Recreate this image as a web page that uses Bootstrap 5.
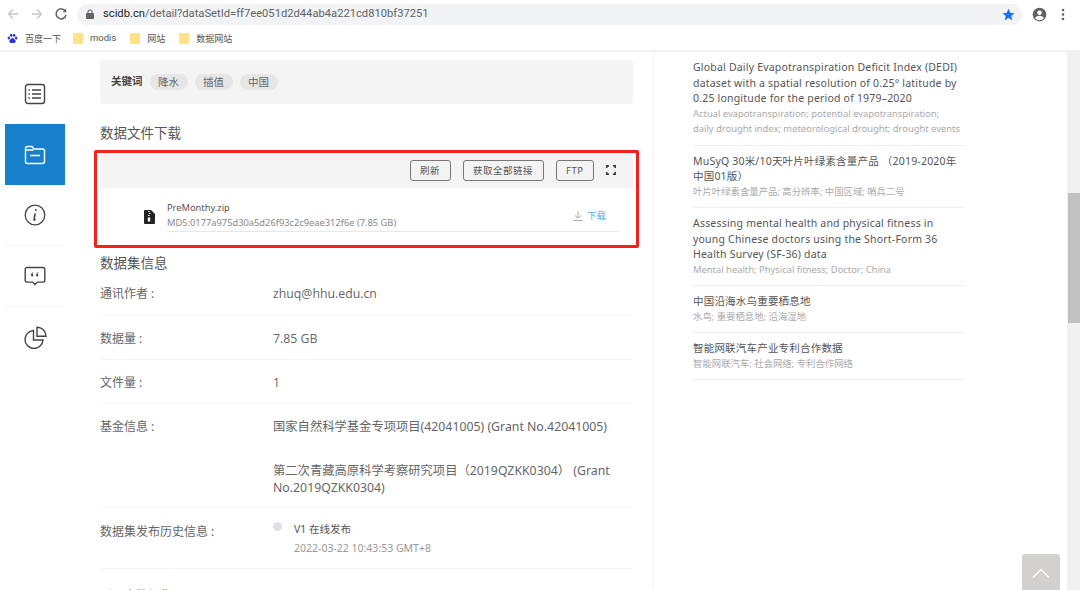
<!DOCTYPE html>
<html lang="zh">
<head>
<meta charset="utf-8">
<title>scidb</title>
<link href="https://cdn.jsdelivr.net/npm/bootstrap@5.3.0/dist/css/bootstrap.min.css" rel="stylesheet">
<style>
html,body{height:590px;overflow:hidden;margin:0;background:#fff}
body{font-family:"Open Sans","Noto Sans CJK SC",sans-serif;color:#555;position:relative}
.cn,.cn *{font-family:"Noto Sans","Noto Sans CJK SC",sans-serif}
.topbar{height:52px;border-bottom:2px solid #f1f1f1;background:#fff}
.addr-row{height:28px;padding:0}
.nav-ic{width:14px;height:14px;margin-left:6px;flex:none}
.omni{height:21px;width:945px;flex:none;margin-left:9px;border-radius:11px;background:#f1f3f4;font-size:11.2px;color:#5f6368;padding:0 7px 0 9px;font-family:"Roboto",sans-serif;white-space:nowrap}
.omni b{font-weight:400;color:#222}
.bm-row{height:21px;font-size:9px;color:#555;padding-left:7px}
.bm-item{margin-right:14px}
.bm-first{margin-right:12px}
.modis{font-family:"Roboto",sans-serif!important;font-size:9.5px}
.folder{width:10px;height:11px;background:#ffe28a;border-radius:1px;margin-right:7px;flex:none}
.stage{height:538px;overflow:hidden}
.rail{width:60px;margin-left:5px;flex:none;padding-top:11px}
.rail-it{height:61px;border-bottom:1px solid #f6f6f6}
.rail-it.on{background:#1680cd;border:0}
.rail-it.plain{border-bottom:0}
.mid{width:533px;margin-left:35px;flex:none;position:relative}
.kw{height:44px;margin-top:8px;background:#f4f4f4;border-radius:3px;padding-left:11px;font-size:11px;color:#444}
.kw b{font-weight:700;margin-right:7px;font-size:10.5px}
.tagpill{background:#e6e6e6;border-radius:9px;height:16px;line-height:16px;font-size:10.5px;margin-right:7px;color:#666;width:38px;text-align:center;white-space:nowrap}
.sect{font-size:13.5px;color:#555;font-weight:400;line-height:20px;margin:0}
.redbox{margin:7px -6px 0 -6px;border:3px solid #f3201b;border-radius:2px;padding:0 3px;height:98px;background:#fff}
.panel{background:#f4f4f4;height:91px;border-radius:2px}
.tools{height:35px;padding-right:13px;padding-bottom:1px}
.outbtn{height:21px;line-height:19px;border:1px solid #777;border-radius:3px;padding:0 9.5px;font-size:9.5px;color:#555;background:transparent;letter-spacing:.5px;margin-right:12px}
.filecard{background:#fff;height:56px;border-radius:3px 3px 0 0;padding-left:67px;padding-right:13px}
.fileinner{border-bottom:1px solid #e8e8e8;height:44px;padding-top:12px}
.fn{font-size:9.3px;color:#555;line-height:15px}
.md{font-size:9.3px;color:#888;line-height:15px;white-space:nowrap}
.dl{font-size:9.5px;color:#55a9f0;margin-left:auto;padding-right:14px}
.sect2{margin-top:5px}
.inf{display:flex;font-size:12.3px;color:#666;border-bottom:1px solid #f4f4f4}
.inf .lb{width:173px;flex:none;font-size:12px}
.inf .vl{flex:1;line-height:17px}
.hist{font-size:10.5px;line-height:19px;color:#555}
.histdate{color:#999;font-size:10.5px;line-height:18px}
.dot{width:9px;height:9px;border-radius:50%;background:#dfe1ea;flex:none;margin-right:12px;margin-top:2px}
.vr-line{width:1px;background:#f3f3f3;margin-left:20px;flex:none;height:538px}
.rightc{width:272px;margin-left:39px;flex:none;padding-top:8px}
.ri{border-bottom:1px solid #eee;margin-bottom:8px;padding-bottom:8px}
.ri .tt{font-size:10.5px;line-height:15.5px;color:#555;letter-spacing:.2px}
.ri .sb{font-size:9.4px;line-height:15.5px;color:#aaa;white-space:nowrap;margin-top:-1px}
.scrollb{position:absolute;right:0;top:52px;width:13px;height:538px;background:#f1f1f1}
.thumb{position:absolute;left:1px;right:0;top:141px;height:130px;background:#c1c1c1}
.totop{position:absolute;right:20px;bottom:-2px;width:38px;height:38px;background:#d3d0d0;border-radius:3px}
</style>
</head>
<body>
<div class="topbar">
  <div class="addr-row d-flex align-items-center">
    <svg class="nav-ic" viewBox="0 0 14 14" fill="none" stroke="#c4c7ca" stroke-width="1.4"><path d="M12 7H2.500M7 2.500 2.500 7 7 11.500"/></svg>
    <svg class="nav-ic" style="margin-left:10px" viewBox="0 0 14 14" fill="none" stroke="#c4c7ca" stroke-width="1.4"><path d="M2 7h9.500M7 2.500 11.500 7 7 11.500"/></svg>
    <svg class="nav-ic" style="margin-left:10px" viewBox="0 0 14 14" fill="none" stroke="#5f6368" stroke-width="1.5"><path d="M11.600 4.600A5 5 0 1 0 12 8"/><path d="M12.200 1.600v3.600H8.600" fill="#5f6368" stroke="none"/></svg>
    <div class="omni d-flex align-items-center">
      <svg width="8" height="10" viewBox="0 0 8 10" class="flex-none" style="margin-right:9px"><path d="M1 4h6a1 1 0 0 1 1 1v4a1 1 0 0 1-1 1H1a1 1 0 0 1-1-1V5a1 1 0 0 1 1-1z" fill="#5f6368"/><path d="M2 4.500V3a2 2 0 0 1 4 0v1.500" fill="none" stroke="#5f6368" stroke-width="1.100"/></svg>
      <span><b>scidb.cn</b>/detail?dataSetId=ff7ee051d2d44ab4a221cd810bf37251</span>
      <svg width="13" height="13" viewBox="0 0 24 24" class="ms-auto"><path fill="#1a73e8" d="M12 1.500l3.200 7.300 7.900.7-6 5.200 1.800 7.800L12 18.400l-6.900 4.100 1.800-7.800-6-5.200 7.900-.7z"/></svg>
    </div>
    <svg width="15" height="15" viewBox="0 0 24 24" class="flex-none" style="margin-left:10px"><circle cx="12" cy="12" r="11" fill="#5f6368"/><circle cx="12" cy="9" r="3.600" fill="#fff"/><path d="M5 18c1.500-3 4-4 7-4s5.500 1 7 4c-1.700 1.900-4.200 3-7 3s-5.300-1.100-7-3z" fill="#fff"/></svg>
    <svg width="4" height="13" viewBox="0 0 4 13" class="flex-none" style="margin-left:14px" fill="#5f6368"><circle cx="2" cy="2" r="1.300"/><circle cx="2" cy="6.500" r="1.300"/><circle cx="2" cy="11" r="1.300"/></svg>
  </div>
  <div class="bm-row d-flex align-items-center cn">
    <div class="d-flex align-items-center bm-first">
      <svg width="11" height="11" viewBox="0 0 12 12" style="margin-right:7px" fill="#2932e1"><ellipse cx="2" cy="5.500" rx="1.300" ry="1.700"/><ellipse cx="4.500" cy="2.500" rx="1.300" ry="1.800"/><ellipse cx="7.700" cy="2.500" rx="1.300" ry="1.800"/><ellipse cx="10" cy="5.500" rx="1.300" ry="1.700"/><path d="M6 5.500c-1.500 0-2 1.500-3 2.500s-.5 3 1.500 3c.7 0 1-.3 1.500-.3s.8.300 1.500.3c2 0 2.500-2 1.500-3S7.500 5.500 6 5.500z"/></svg>
      <span>百度一下</span>
    </div>
    <div class="d-flex align-items-center bm-item"><i class="folder"></i><span class="modis">modis</span></div>
    <div class="d-flex align-items-center bm-item"><i class="folder"></i><span>网站</span></div>
    <div class="d-flex align-items-center bm-item"><i class="folder"></i><span>数据网站</span></div>
  </div>
</div>
<div class="stage d-flex">
  <div class="rail">
    <div class="rail-it d-flex align-items-center justify-content-center plain">
      <svg width="22" height="22" viewBox="0 0 22 22" fill="none" stroke="#444" stroke-width="1.400"><rect x="1.500" y="1.500" width="19" height="19" rx="2.500"/><path d="M8 7h9M8 11h9M8 15h9"/><path d="M4.500 7h1.500M4.500 11h1.500M4.500 15h1.500"/></svg>
    </div>
    <div class="rail-it on d-flex align-items-center justify-content-center">
      <svg width="22" height="20" viewBox="0 0 22 20" fill="none" stroke="#fff" stroke-width="1.400"><path d="M1.500 17V3.500a2 2 0 0 1 2-2h4.500l2 2.500h8.500a2 2 0 0 1 2 2V16.500a2 2 0 0 1-2 2h-15a2 2 0 0 1-2-1.500z"/><path d="M1.500 5h8M6 10.500h10"/></svg>
    </div>
    <div class="rail-it d-flex align-items-center justify-content-center">
      <svg width="22" height="22" viewBox="0 0 22 22" fill="none" stroke="#444" stroke-width="1.300"><circle cx="11" cy="11" r="9.800"/><path d="M11.200 9.300l-1.200 6.400c0 .5.700.5 1.500-.3" stroke-width="1.600"/><circle cx="11.900" cy="6" r="1" fill="#444" stroke="none"/></svg>
    </div>
    <div class="rail-it d-flex align-items-center justify-content-center">
      <svg width="22" height="20" viewBox="0 0 22 20" fill="none" stroke="#444" stroke-width="1.400"><path d="M3 1.500h16a1.800 1.800 0 0 1 1.800 1.800v11a1.800 1.800 0 0 1-1.800 1.800h-5.500L11 18.500l-2.500-2.400H3a1.800 1.800 0 0 1-1.800-1.800v-11A1.800 1.800 0 0 1 3 1.500z"/><path d="M9.300 6.200C7.800 6.800 7 7.800 7 9.300a1.200 1.200 0 1 0 1.400-1.200c.1-.6.500-1 1.100-1.300zM14.300 6.200c-1.500.6-2.300 1.600-2.300 3.100a1.200 1.200 0 1 0 1.400-1.200c.1-.6.500-1 1.100-1.300z" fill="#444" stroke="none"/></svg>
    </div>
    <div class="rail-it d-flex align-items-center justify-content-center plain">
      <svg width="23" height="23" viewBox="0 0 23 23" fill="none" stroke="#444" stroke-width="1.400"><path d="M9.500 4.500a9 9 0 1 0 9.500 9.500H9.500z"/><path d="M13 1.200a9 9 0 0 1 9 9h-9z"/></svg>
    </div>
  </div>

  <div class="mid cn">
    <div class="kw d-flex align-items-center">
      <b>关键词</b><span class="tagpill">降水</span><span class="tagpill">插值</span><span class="tagpill">中国</span>
    </div>
    <h2 class="sect" style="margin-top:19px">数据文件下载</h2>
    <div class="redbox">
      <div class="panel">
        <div class="tools d-flex align-items-center justify-content-end">
          <button class="outbtn" type="button">刷新</button>
          <button class="outbtn" type="button">获取全部链接</button>
          <button class="outbtn" type="button">FTP</button>
          <svg width="10" height="10" viewBox="0 0 10 10" fill="none" stroke="#333" stroke-width="1.500" class="me-1"><path d="M.8 3V.8H3M7 .8h2.200V3M9.200 7v2.200H7M3 9.200H.8V7"/></svg>
        </div>
        <div class="filecard">
          <div class="fileinner d-flex">
            <svg width="11" height="14" viewBox="0 0 11 14" style="position:absolute;margin-left:-23px;margin-top:10px"><path d="M1 0h6l4 4v9a1 1 0 0 1-1 1H1a1 1 0 0 1-1-1V1a1 1 0 0 1 1-1z" fill="#222"/><path d="M4 1.500h1.500M5 3.500h1.500M4 5.500h1.500" stroke="#fff"/><rect x="3.800" y="7.500" width="2.400" height="4" fill="#fff"/></svg>
            <div>
              <div class="fn">PreMonthy.zip</div>
              <div class="md">MD5:0177a975d30a5d26f93c2c9eae312f6e (7.85 GB)</div>
            </div>
            <div class="dl d-flex align-items-center align-self-start" style="margin-top:9px">
              <svg width="10" height="10" viewBox="0 0 10 10" fill="none" stroke="#aaa" class="me-1"><path d="M5 .5v6.500M2.200 4.500 5 7.200 7.800 4.500M.5 9.500h9"/></svg><span>下载</span>
            </div>
          </div>
        </div>
      </div>
    </div>
    <h2 class="sect sect2">数据集信息</h2>
    <div class="inf" style="height:43px;padding-top:12px"><div class="lb">通讯作者 :</div><div class="vl" style="font-family:'Open Sans','Noto Sans CJK SC',sans-serif">zhuq@hhu.edu.cn</div></div>
    <div class="inf" style="height:44px;padding-top:14px"><div class="lb">数据量 :</div><div class="vl" style="font-family:'Open Sans',sans-serif">7.85 GB</div></div>
    <div class="inf" style="height:44px;padding-top:14px"><div class="lb">文件量 :</div><div class="vl" style="font-family:'Open Sans',sans-serif">1</div></div>
    <div class="inf" style="height:104px;padding-top:14px"><div class="lb">基金信息 :</div><div class="vl">
      <div>国家自然科学基金专项项目(42041005) (Grant No.42041005)</div>
      <div style="margin-top:27px">第二次青藏高原科学考察研究项目（2019QZKK0304） (Grant No.2019QZKK0304)</div>
    </div></div>
    <div class="inf" style="height:61px;padding-top:12px"><div class="lb" style="padding-top:3px">数据集发布历史信息 :</div><div class="vl d-flex">
      <i class="dot"></i>
      <div><div class="hist">V1 在线发布</div><div class="histdate">2022-03-22 10:43:53 GMT+8</div></div>
    </div></div>
    <div class="inf" style="border:0;padding-top:18px"><div class="lb">引用本数据集 :</div></div>
  </div>

  <div class="vr-line"></div>

  <div class="rightc cn">
    <div class="ri"><div class="tt">Global Daily Evapotranspiration Deficit Index (DEDI) dataset with a spatial resolution of 0.25° latitude by 0.25 longitude for the period of 1979–2020</div><div class="sb">Actual evapotranspiration; potential evapotranspiration;<br>daily drought index; meteorological drought; drought events</div></div>
    <div class="ri"><div class="tt">MuSyQ 30米/10天叶片叶绿素含量产品 （2019-2020年中国01版）</div><div class="sb">叶片叶绿素含量产品; 高分辨率; 中国区域; 哨兵二号</div></div>
    <div class="ri"><div class="tt">Assessing mental health and physical fitness in young Chinese doctors using the Short-Form 36 Health Survey (SF-36) data</div><div class="sb">Mental health; Physical fitness; Doctor; China</div></div>
    <div class="ri"><div class="tt">中国沿海水鸟重要栖息地</div><div class="sb">水鸟; 重要栖息地; 沿海湿地</div></div>
    <div class="ri"><div class="tt">智能网联汽车产业专利合作数据</div><div class="sb">智能网联汽车; 社会网络; 专利合作网络</div></div>
  </div>
</div>
<div class="scrollb"><div class="thumb"></div></div>
<div class="totop d-flex align-items-center justify-content-center">
  <svg width="18" height="10" viewBox="0 0 18 10" fill="none" stroke="#fff" stroke-width="1.300"><path d="M1 9.500 9 1.500 17 9.500"/></svg>
</div>
</body>
</html>
